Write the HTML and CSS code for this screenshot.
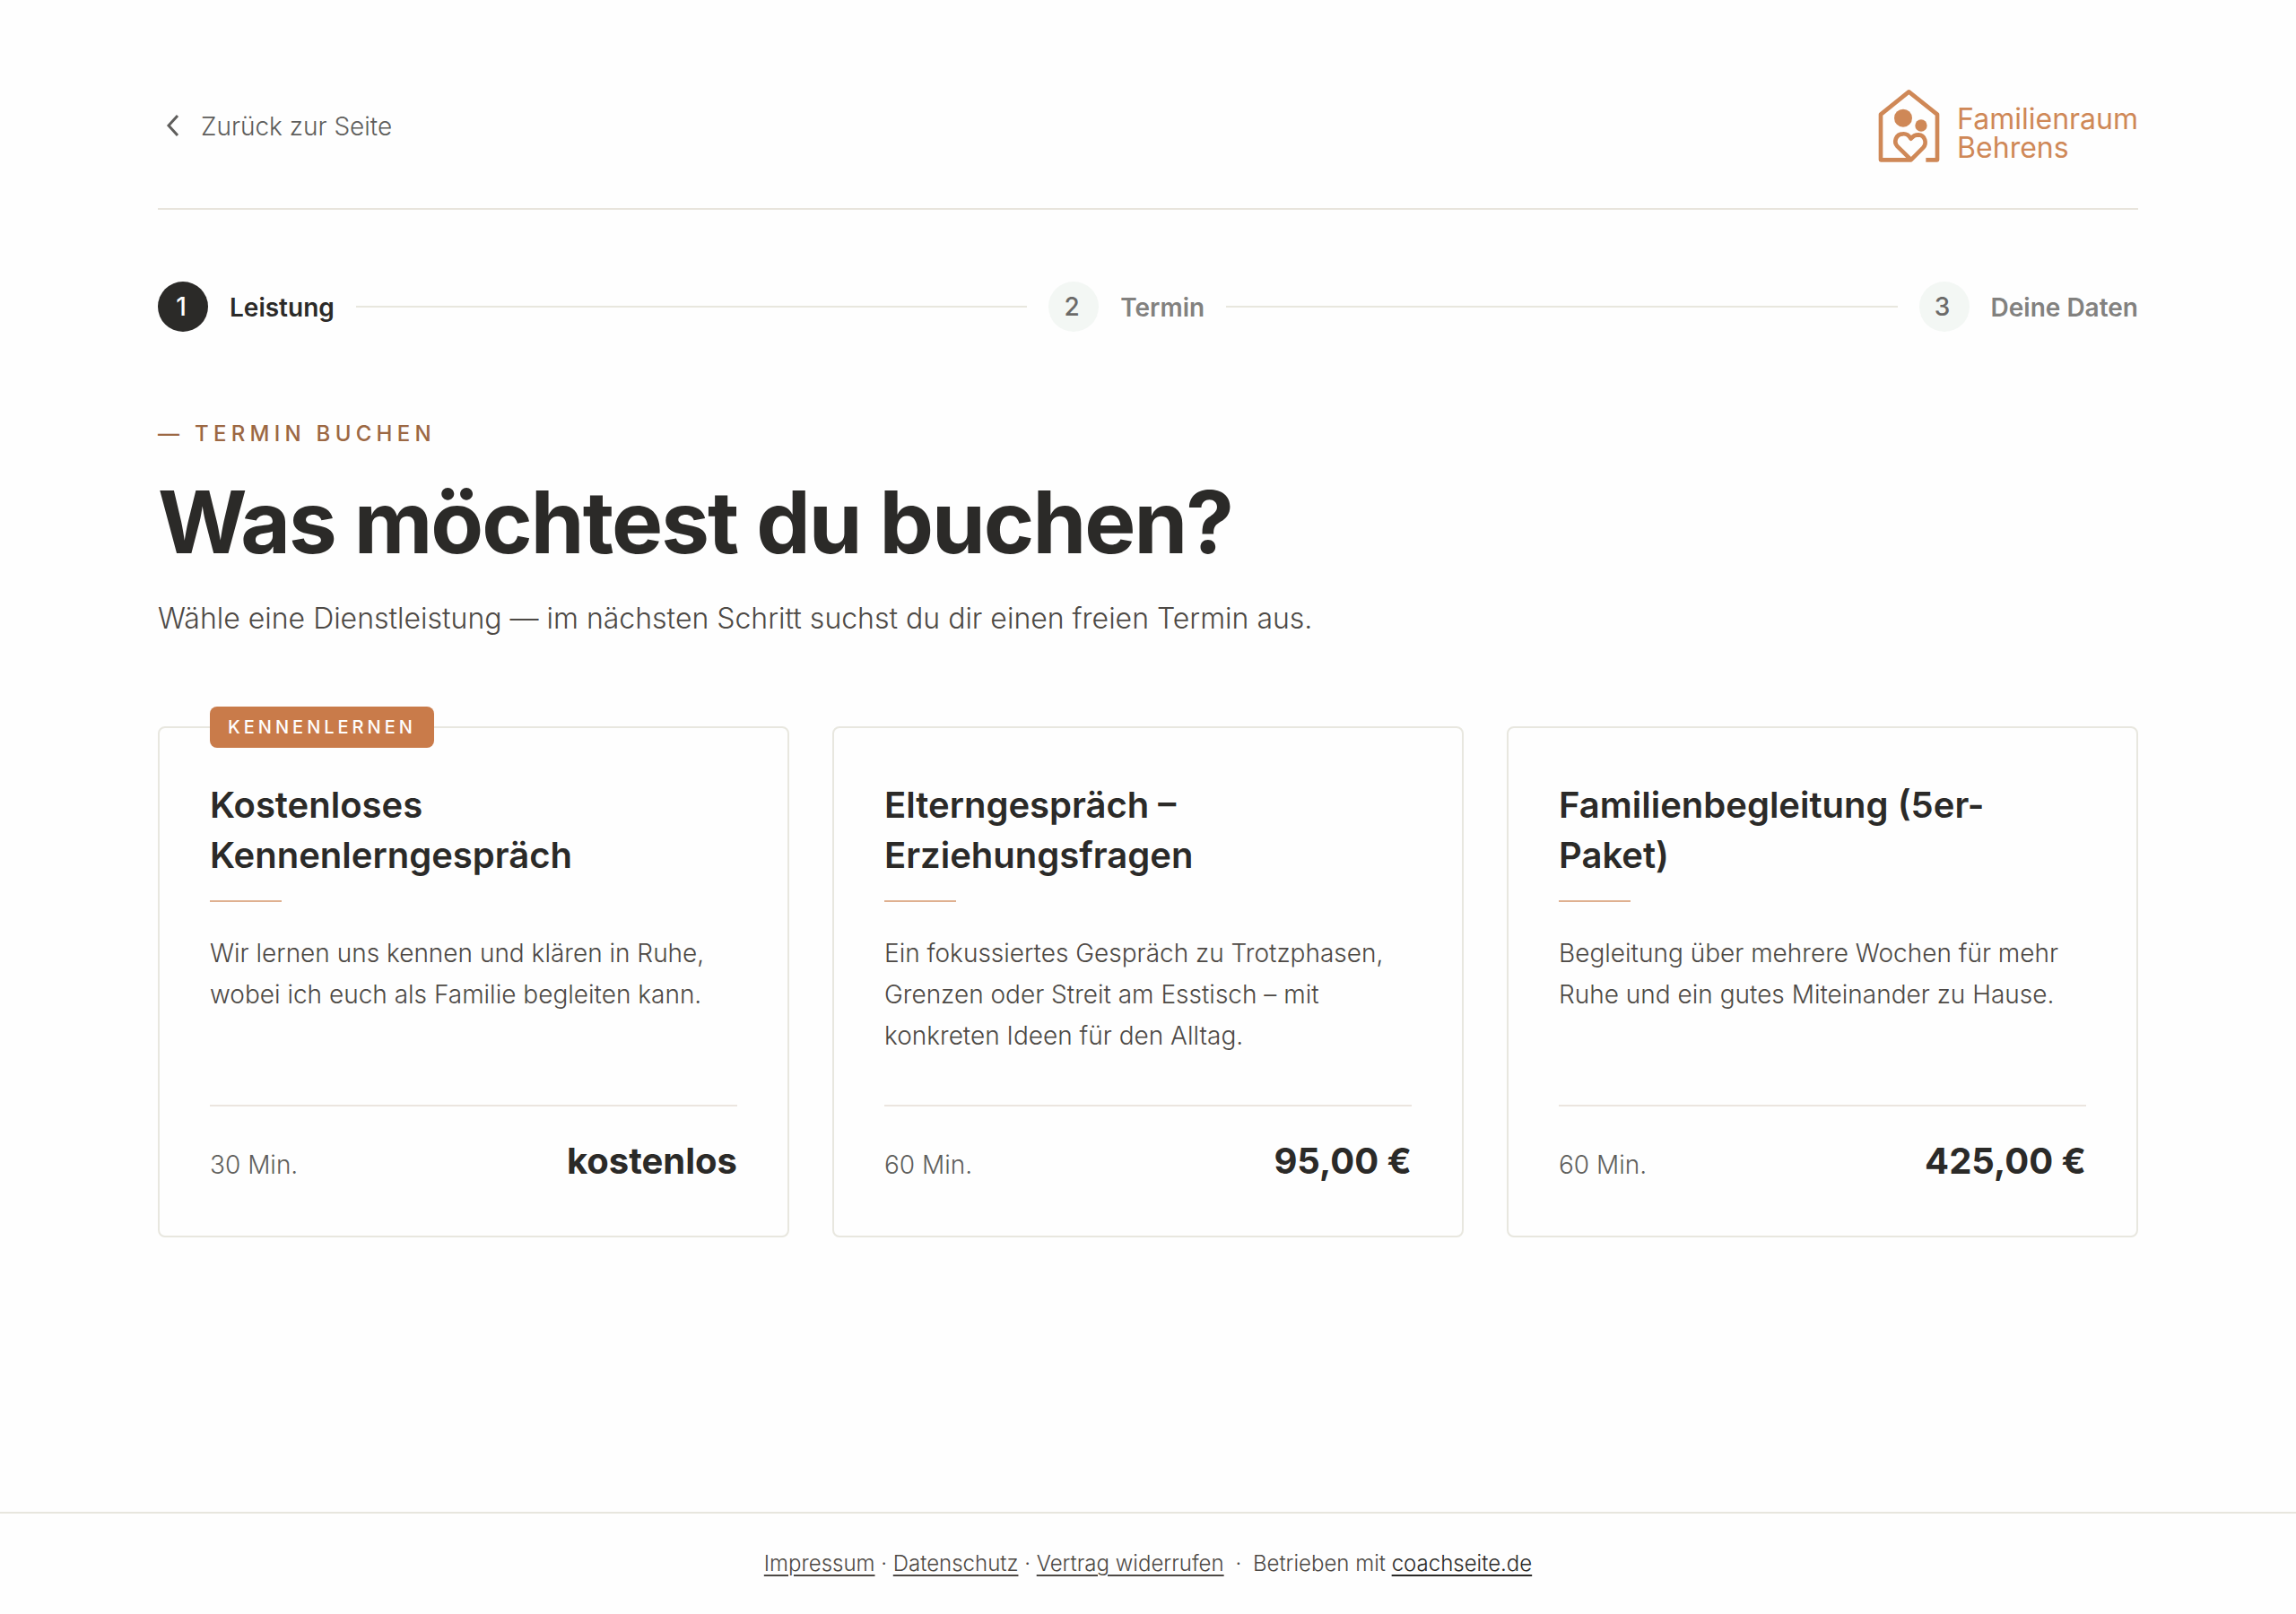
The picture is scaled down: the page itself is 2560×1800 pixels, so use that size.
FILE: index.html
```html
<!DOCTYPE html>
<html lang="de">
<head>
  <meta charset="utf-8">
  <meta name="viewport" content="width=device-width, initial-scale=1">
  <title>Termin buchen – Familienraum Behrens</title>
  <link rel="stylesheet" href="styles.css">
</head>
<body>
  <div class="container">
    <header class="topbar">
      <a class="back" href="#">
        <svg class="back-icon" viewBox="0 0 32 32" aria-hidden="true">
          <path d="M22 5 L12 16 L22 27"/>
        </svg>
        <span class="label">Zurück zur Seite</span>
      </a>
      <a class="logo" href="#">
        <svg class="logo-icon" viewBox="98 56 210 249" aria-hidden="true">
          <path d="M258 294 H296 V142 L201 66 L107 142 V294 H208 L249 253 C262 239 256 211 233 210 C222 210 214 215 208 223 C200 210 191 206 181 207 C157 208 149 234 163 249 L206 291"/>
          <circle cx="182" cy="154" r="30"/>
          <circle cx="242" cy="179" r="20"/>
        </svg>
        <span class="logo-text">Familienraum<br>Behrens</span>
      </a>
    </header>

    <ol class="steps">
      <li class="step active"><span class="step-number">1</span><span class="label">Leistung</span></li>
      <li class="step-line" aria-hidden="true"></li>
      <li class="step"><span class="step-number">2</span><span class="label">Termin</span></li>
      <li class="step-line" aria-hidden="true"></li>
      <li class="step"><span class="step-number">3</span><span class="label">Deine Daten</span></li>
    </ol>

    <main>
      <p class="eyebrow">— Termin buchen</p>
      <h1>Was möchtest du buchen?</h1>
      <p class="intro">Wähle eine Dienstleistung — im nächsten Schritt suchst du dir einen freien Termin aus.</p>

      <div class="cards">
        <a class="card" href="#">
          <span class="badge">Kennenlernen</span>
          <h2>Kostenloses Kennenlerngespräch</h2>
          <p class="description">Wir lernen uns kennen und klären in Ruhe, wobei ich euch als Familie begleiten kann.</p>
          <div class="card-footer">
            <span class="duration">30 Min.</span>
            <span class="price">kostenlos</span>
          </div>
        </a>
        <a class="card" href="#">
          <h2>Elterngespräch – Erziehungsfragen</h2>
          <p class="description">Ein fokussiertes Gespräch zu Trotzphasen, Grenzen oder Streit am Esstisch – mit konkreten Ideen für den Alltag.</p>
          <div class="card-footer">
            <span class="duration">60 Min.</span>
            <span class="price">95,00 €</span>
          </div>
        </a>
        <a class="card" href="#">
          <h2>Familienbegleitung (5er-Paket)</h2>
          <p class="description">Begleitung über mehrere Wochen für mehr Ruhe und ein gutes Miteinander zu Hause.</p>
          <div class="card-footer">
            <span class="duration">60 Min.</span>
            <span class="price">425,00 €</span>
          </div>
        </a>
      </div>
    </main>
  </div>

  <footer class="footer">
    <a href="#">Impressum</a> · <a href="#">Datenschutz</a> · <a href="#">Vertrag widerrufen</a>
    <span class="dot">·</span>
    Betrieben mit <a class="brand" href="#">coachseite.de</a>
  </footer>
</body>
</html>
```
FILE: styles.css
```css
* {
  box-sizing: border-box;
}

body {
  display: flex;
  flex-direction: column;
  min-height: 100vh;
  margin: 0;
  background: #fefefe;
  color: #2b2a28;
  font-family: Inter, "Liberation Sans", sans-serif;
  font-size: 28px;
  font-weight: 300;
}

h1, h2, p, ol {
  margin: 0;
  padding: 0;
}

a {
  color: inherit;
}

.container {
  flex: 1;
  width: 100%;
  max-width: 2400px;
  margin: 0 auto;
  padding: 96px 96px 0;
}

.topbar {
  display: flex;
  justify-content: space-between;
  align-items: center;
  padding-bottom: 48px;
  border-bottom: 2px solid #e8e4dc;
}

.back {
  display: flex;
  align-items: center;
  gap: 16px;
  color: #5f5e5c;
  text-decoration: none;
}

.back-icon {
  width: 32px;
  height: 32px;
  fill: none;
  stroke: currentColor;
  stroke-width: 3;
}

.label {
  padding-top: 2px;
}

.logo {
  display: flex;
  align-items: center;
  gap: 18px;
  height: 88px;
  color: #cf8857;
  text-decoration: none;
}

.logo-icon {
  width: 70px;
  height: 83px;
}

.logo-icon path {
  fill: none;
  stroke: currentColor;
  stroke-width: 14;
  stroke-linejoin: round;
}

.logo-icon circle {
  fill: currentColor;
}

.logo-text {
  padding-top: 18px;
  font-size: 32px;
  font-weight: 400;
  line-height: 32px;
}

.steps {
  display: flex;
  align-items: center;
  gap: 24px;
  margin: 80px 0 96px;
  list-style: none;
}

.step {
  display: flex;
  align-items: center;
  gap: 24px;
  color: #82817f;
  font-weight: 600;
}

.step-number {
  display: flex;
  justify-content: center;
  align-items: center;
  width: 56px;
  height: 56px;
  padding-right: 4px;
  border-radius: 50%;
  background: #f3f7f4;
  color: #6b6a68;
  font-weight: 500;
}

.step.active {
  color: #2b2a28;
}

.step.active .step-number {
  background: #2b2a28;
  color: #fefefe;
}

.step-line {
  flex: 1;
  height: 2px;
  background: #e8e7de;
}

.eyebrow {
  color: #9c6843;
  font-size: 24px;
  font-weight: 500;
  line-height: 36px;
  letter-spacing: 0.22em;
  text-transform: uppercase;
}

h1 {
  margin-top: 24px;
  font-size: 96px;
  font-weight: 700;
  line-height: 112px;
  letter-spacing: -0.02em;
}

.intro {
  margin-top: 24px;
  color: #4d4945;
  font-size: 32px;
  line-height: 56px;
}

.cards {
  display: grid;
  grid-template-columns: repeat(3, 1fr);
  gap: 48px;
  margin-top: 92px;
}

.card {
  position: relative;
  display: flex;
  flex-direction: column;
  padding: 56px;
  border: 2px solid #e8e7df;
  border-radius: 8px;
  text-decoration: none;
}

.badge {
  position: absolute;
  top: -24px;
  left: 56px;
  padding: 0 20px;
  border-radius: 8px;
  background: #c97b4a;
  color: #fefefe;
  font-size: 20px;
  font-weight: 500;
  line-height: 46px;
  letter-spacing: 0.2em;
  text-transform: uppercase;
}

h2 {
  padding-top: 2px;
  font-size: 40px;
  font-weight: 600;
  line-height: 56px;
}

h2::after {
  content: "";
  display: block;
  width: 80px;
  height: 2px;
  margin-top: 22px;
  background: #dfb090;
}

.description {
  flex: 1;
  margin: 34px 0 54px;
  color: #4d4945;
  line-height: 46px;
}

.card-footer {
  display: flex;
  justify-content: space-between;
  align-items: baseline;
  padding-top: 34px;
  border-top: 2px solid #ebe5df;
}

.duration {
  color: #5f5e5c;
}

.price {
  font-size: 40px;
  font-weight: 700;
  line-height: 54px;
}

.footer {
  padding: 36px 48px;
  border-top: 2px solid #e7e6de;
  color: #4d4945;
  font-size: 24px;
  line-height: 40px;
  text-align: center;
}

.footer a {
  text-decoration-thickness: 2px;
  text-underline-offset: 4px;
}

.dot {
  margin: 0 6px;
}

.brand {
  color: #2b2a28;
}
```
